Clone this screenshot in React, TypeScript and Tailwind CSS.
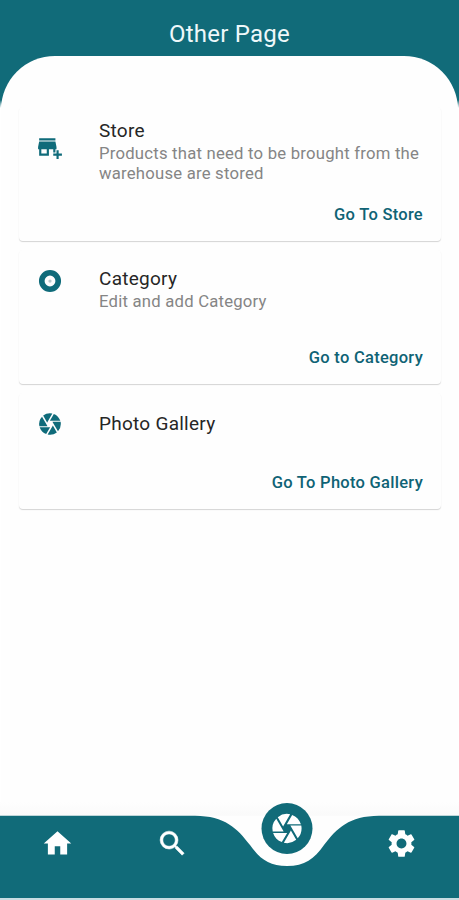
import React from 'react';
import type { IconType } from 'react-icons';
import { MdAddBusiness, MdCamera, MdHome, MdSettings } from 'react-icons/md';

interface IconProps {
  size?: number | string;
  className?: string;
}

interface PageCardProps {
  icon: IconType | React.FC<IconProps>;
  title: string;
  subtitle?: string;
  action: string;
  className: string;
  iconClass: string;
  titleClass: string;
}

const DiscIcon: React.FC<IconProps> = ({ size = 24, className }) => (
  <svg width={size} height={size} viewBox="0 0 24 24" className={className}>
    <circle cx="12" cy="12" r="7.6" fill="none" stroke="currentColor" strokeWidth="5.2" />
    <circle cx="12" cy="12" r="1.5" fill="#b9c9cc" />
  </svg>
);

const SearchIcon: React.FC<IconProps> = ({ size = 24, className }) => (
  <svg width={size} height={size} viewBox="0 0 24 24" fill="currentColor" stroke="currentColor" strokeWidth="0.4" className={className}>
    <path d="M15.5 14h-.79l-.28-.27A6.471 6.471 0 0 0 16 9.5 6.5 6.5 0 1 0 9.5 16c1.61 0 3.09-.59 4.23-1.57l.27.28v.79l5 4.99L20.49 19l-4.99-5zm-6 0C7.01 14 5 11.99 5 9.5S7.01 5 9.5 5 14 7.01 14 9.5 11.99 14 9.5 14z" />
  </svg>
);

const cards: PageCardProps[] = [
  {
    icon: MdAddBusiness,
    title: 'Store',
    subtitle: 'Products that need to be brought from the warehouse are stored',
    action: 'Go To Store',
    className: 'h-[134px]',
    iconClass: 'mt-[27px]',
    titleClass: 'pt-[12px]',
  },
  {
    icon: DiscIcon,
    title: 'Category',
    subtitle: 'Edit and add Category',
    action: 'Go to Category',
    className: 'h-[134px]',
    iconClass: 'mt-[18px]',
    titleClass: 'pt-[17px]',
  },
  {
    icon: MdCamera,
    title: 'Photo Gallery',
    action: 'Go To Photo Gallery',
    className: 'h-[116px]',
    iconClass: 'mt-[18px]',
    titleClass: 'pt-[19px]',
  },
];

const PageCard: React.FC<PageCardProps> = ({ icon: Icon, title, subtitle, action, className, iconClass, titleClass }) => (
  <div className={`flex flex-col justify-between rounded-[4px] bg-[#fefefe] shadow-[0_1px_1px_rgba(0,0,0,0.17)] ${className}`}>
    <div className="flex">
      <Icon size={26} className={`ml-[18px] shrink-0 text-[#0f6b7a] ${iconClass}`} />
      <div className={`ml-[36px] ${titleClass}`}>
        <h2 className="text-[19px] leading-[23px] tracking-[0.26px] text-[#262626]">{title}</h2>
        {subtitle && (
          <p className="w-[335px] pt-[2px] text-[16.7px] leading-[20px] tracking-[0.22px] text-[#858585]">{subtitle}</p>
        )}
      </div>
    </div>
    <div className="flex justify-end pr-[18px] pb-[16px]">
      <button className="text-[16.5px] leading-[20px] font-medium tracking-[0.28px] text-[#0f6375]">{action}</button>
    </div>
  </div>
);

const BottomBar: React.FC = () => (
  <nav className="relative h-[98px] shrink-0">
    <div className="absolute inset-x-0 top-0 h-[20px] bg-gradient-to-b from-[#fefefe] to-[#f8f8f8]" />
    <svg className="absolute inset-x-0 top-0" width="459" height="98" viewBox="0 0 459 98">
      <path
        d="M195 13.7C225 14 237 26 250 43C260 57 269 64 287 64C305 64 314 57 324 43C337 26 349 14 379 13.7Z"
        fill="#fefefe"
      />
      <path
        d="M0 13.7H195C225 14 237 26 250 43C260 57 269 64 287 64C305 64 314 57 324 43C337 26 349 14 379 13.7H459V96H0Z"
        fill="#116b79"
      />
      <path d="M0 96H459V98H0Z" fill="#c9dde2" />
    </svg>
    <div className="relative grid grid-cols-4 justify-items-center text-white">
      <button className="mt-[25px] h-[33px]"><MdHome size={33} /></button>
      <button className="mt-[25px] h-[33px]"><SearchIcon size={33} /></button>
      <button className="mt-[1px] flex h-[51px] w-[51px] translate-x-[0.5px] items-center justify-center rounded-full bg-[#116b79]">
        <MdCamera size={35} />
      </button>
      <button className="mt-[25px] h-[33px]"><MdSettings size={33} /></button>
    </div>
  </nav>
);

export default function App() {
  return (
    <div className="flex h-[900px] w-[459px] flex-col overflow-hidden bg-[linear-gradient(#116b79_100px,#fff_108px)] font-['Roboto',sans-serif]">
      <header className="flex h-[56px] shrink-0 items-center justify-center pt-[11px]">
        <h1 className="text-[24px] leading-[28px] tracking-[0.22px] text-[#eef8fa]">Other Page</h1>
      </header>
      <main className="mx-px flex grow flex-col gap-[9px] rounded-t-[54px] bg-[#fefefe] pt-[51px] pr-[17px] pl-[18px]">
        {cards.map((card) => (
          <PageCard key={card.title} {...card} />
        ))}
      </main>
      <BottomBar />
    </div>
  );
}
